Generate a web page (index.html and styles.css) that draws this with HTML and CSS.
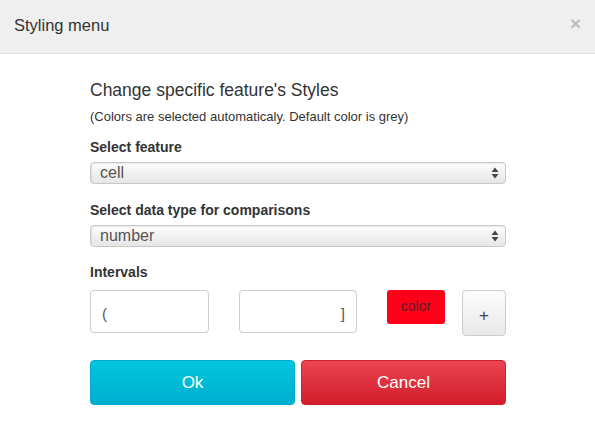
FILE: index.html
```html
<!DOCTYPE html>
<html>
<head>
<meta charset="utf-8">
<link rel="stylesheet" href="styles.css">
</head>
<body>
<div class="modal">
  <div class="modal-header">
    <h3 class="modal-title">Styling menu</h3>
    <span class="close">&times;</span>
  </div>
  <div class="modal-body">
    <h4 class="heading">Change specific feature's Styles</h4>
    <p class="note">(Colors are selected automaticaly. Default color is grey)</p>
    <label class="label">Select feature</label>
    <div class="select"><span>cell</span>
      <svg class="arrows" width="8" height="12" viewBox="0 0 8 12"><path d="M4 0.5 L7.5 5 L0.5 5 Z M4 11.5 L7.5 7 L0.5 7 Z" fill="#444"/></svg>
    </div>
    <label class="label">Select data type for comparisons</label>
    <div class="select"><span>number</span>
      <svg class="arrows" width="8" height="12" viewBox="0 0 8 12"><path d="M4 0.5 L7.5 5 L0.5 5 Z M4 11.5 L7.5 7 L0.5 7 Z" fill="#444"/></svg>
    </div>
    <label class="label label-intervals">Intervals</label>
    <div class="intervals">
      <div class="input left">(</div>
      <div class="input right">]</div>
      <div class="color-btn">color</div>
      <div class="plus-btn">+</div>
    </div>
    <div class="actions">
      <div class="btn ok">Ok</div>
      <div class="btn cancel">Cancel</div>
    </div>
  </div>
</div>
</body>
</html>
```

FILE: styles.css
```css
* { box-sizing: border-box; }
html, body { margin: 0; padding: 0; background: #fff; }
body { font-family: "Liberation Sans", Arial, Helvetica, sans-serif; color: #333; width: 595px; height: 427px; overflow: hidden; }

.modal-header {
  height: 54px;
  background: #efefef;
  border-bottom: 1px solid #dedede;
  display: flex;
  align-items: center;
  justify-content: space-between;
  padding: 0 14px 2px 14px;
}
.modal-title { margin: 0; font-size: 16.5px; font-weight: normal; color: #333; }
.close { color: #bcbcbc; font-size: 19px; font-weight: bold; line-height: 1; margin-top: -4px; }

.modal-body { padding: 25px 89px 0 90px; }
.heading { margin: 0; font-size: 17.5px; font-weight: normal; color: #333; line-height: 22px; }
.note { margin: 8px 0 0; font-size: 13px; color: #333; line-height: 16px; }
.label { display: block; font-size: 14px; font-weight: bold; color: #333; line-height: 16px; margin: 14px 0 7px; }

.select {
  height: 22px;
  border: 1px solid #c8c8c8;
  border-radius: 4px;
  background: linear-gradient(#fefefe, #f3f3f3 40%, #e6e6e6);
  box-shadow: inset 1px 1px 1px rgba(0,0,0,0.08);
  display: flex;
  align-items: center;
  justify-content: space-between;
  padding: 0 6px 0 9px;
  font-size: 16px;
  color: #555;
}
.select + .label { margin-top: 18px; }
.select + .label-intervals { margin-top: 17px; margin-bottom: 10px; }
.arrows { display: block; }

.intervals { display: flex; align-items: flex-start; }
.input {
  height: 43px;
  border: 1px solid #ccc;
  border-radius: 4px;
  font-size: 15px;
  color: #555;
  display: flex;
  align-items: center;
  padding: 3px 11px 0;
}
.input.left { width: 119px; }
.input.right { width: 118px; margin-left: 30px; justify-content: flex-end; }
.color-btn {
  width: 58px; height: 34px;
  margin-left: 30px;
  background: #ff0019;
  border-radius: 3px;
  color: #5a1c24;
  font-size: 14px;
  display: flex; align-items: center; justify-content: center;
  padding-bottom: 2px;
}
.plus-btn {
  width: 44px; height: 46px;
  margin-left: 17px;
  border: 1px solid #cdcdcd;
  border-radius: 4px;
  background: linear-gradient(#fdfdfd, #e8e8e8);
  font-size: 17px;
  color: #444;
  display: flex; align-items: center; justify-content: center;
  padding-top: 6px;
}

.actions { display: flex; gap: 6px; margin-top: 24px; }
.btn {
  height: 45px;
  border-radius: 4px;
  color: #fff;
  font-size: 17px;
  display: flex; align-items: center; justify-content: center;
}
.ok { width: 205px; background: linear-gradient(#00c6de, #00aecf); border: 1px solid #00a9c9; }
.cancel { width: 205px; background: linear-gradient(#ea4651, #d31c2a); border: 1px solid #cc2030; }
```
